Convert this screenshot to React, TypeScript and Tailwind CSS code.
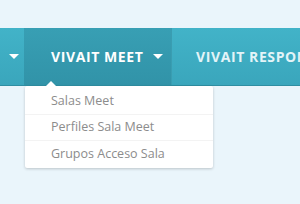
import React from 'react';

const Caret = ({ className }: { className?: string }) => (
  <svg width="10" height="5" viewBox="0 0 10 5" className={className}>
    <path d="M0 0h10L5 5z" fill="currentColor" />
  </svg>
);

const App: React.FC = () => {
  const items = ['Salas Meet', 'Perfiles Sala Meet', 'Grupos Acceso Sala'];

  return (
    <div
      className="w-[300px] h-[204px] bg-[#eaf5fb] overflow-hidden pt-[28px]"
      style={{ fontFamily: '"Open Sans", sans-serif' }}
    >
      <nav className="h-[58px] flex bg-gradient-to-b from-[#42b3c8] to-[#3aa6bc] border-b border-[#2f8ea2] whitespace-nowrap">
        {/* previous menu, cut off */}
        <div className="w-[24px] shrink-0 flex items-center justify-center text-white">
          <Caret className="ml-[4px]" />
        </div>

        {/* active menu */}
        <div className="relative w-[147px] shrink-0 flex items-center pl-[27px] bg-gradient-to-b from-[#389fb4] to-[#3193a8] text-white">
          <span className="text-[14px] font-bold tracking-[0.6px]">VIVAIT MEET</span>
          <Caret className="ml-[10px]" />

          <div className="absolute left-[1px] top-[58px] w-[188px] bg-white rounded-[2px] shadow-[0_1px_3px_rgba(0,0,0,0.2)] z-10">
            <div className="absolute -top-[5px] left-[21px] w-0 h-0 border-x-[5px] border-x-transparent border-b-[5px] border-b-white" />
            <ul className="pt-[3px] pb-[1px]">
              {items.map((item, i) => (
                <li
                  key={item}
                  className={`h-[26px] flex items-center pl-[26px] text-[12.5px] text-[#8c8c8c] ${i < items.length - 1 ? 'border-b border-[#f3f3f3]' : ''}`}
                >
                  {item}
                </li>
              ))}
            </ul>
          </div>
        </div>

        {/* next menu */}
        <div className="flex items-center pl-[24px] text-[#e3f4f8] border-l border-[#3a9db1]">
          <span className="text-[14px] font-bold tracking-[0.6px]">VIVAIT RESPONSE</span>
        </div>
      </nav>
    </div>
  );
};

export default App;
